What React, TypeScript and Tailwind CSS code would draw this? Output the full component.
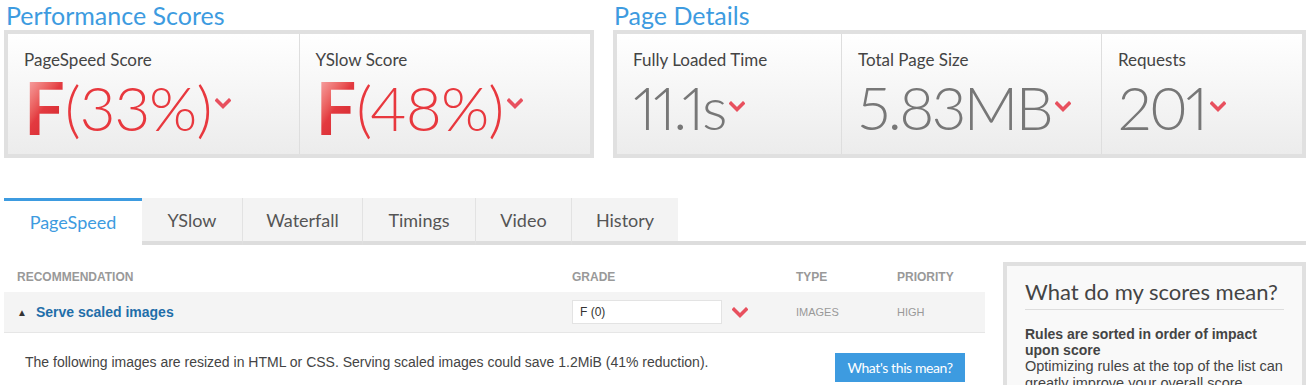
import React from "react";

const heading = "font-['Lato','Open_Sans',sans-serif]";
const arial = "font-['Liberation_Sans',Arial,sans-serif]";

const Chevron = ({ className = "" }: { className?: string }) => (
    <svg viewBox="0 0 16 12" className={className} fill="none">
        <path d="M2 2.5 L8 8.5 L14 2.5" stroke="currentColor" strokeWidth="3.6" strokeLinecap="square" />
    </svg>
);

type GradeProps = { label: string; grade: string; pct: string; border?: boolean };

const GradeCell = ({ label, grade, pct, border }: GradeProps) => (
    <div className={`flex-1 px-4 pt-4 ${border ? "border-l border-[#dedede]" : ""}`}>
        <div className={`${heading} text-[17px] text-[#444] leading-5`}>{label}</div>
        <div className="flex items-start mt-[8px]">
            <span className={`${heading} font-bold text-[72px] leading-[58px] bg-linear-to-br from-[#f7b0b3] via-[#e33a40] to-[#d0222a] bg-clip-text text-transparent`}>
                {grade}
            </span>
            <span className={`${heading} font-light proportional-nums text-[62px] leading-[58px] text-[#e8383e] tracking-[-1px]`}>{pct}</span>
            <Chevron className="w-[16px] h-[12px] text-[#e8505e] mt-[20px] ml-[4px]" />
        </div>
    </div>
);

type DetailProps = { label: string; value: string; width: string; border?: boolean };

const DetailCell = ({ label, value, width, border }: DetailProps) => (
    <div className={`${width} px-4 pt-4 ${border ? "border-l border-[#dedede]" : ""}`}>
        <div className={`${heading} text-[17px] text-[#444] leading-5`}>{label}</div>
        <div className="flex items-start mt-[8px]">
            <span className={`${heading} font-light proportional-nums text-[60px] leading-[58px] text-[#777] tracking-[-2.5px]`}>{value}</span>
            <Chevron className="w-[16px] h-[12px] text-[#e8505e] mt-[23px] ml-[4px]" />
        </div>
    </div>
);

const tabs = ["PageSpeed", "YSlow", "Waterfall", "Timings", "Video", "History"];
const tabWidths = ["w-[138px]", "w-[100px]", "w-[120px]", "w-[113px]", "w-[96px]", "w-[107px]"];

export default function App() {
    return (
        <div className="w-[1306px] h-[385px] overflow-hidden bg-white pl-[4px]">
            {/* score panels */}
            <div className="flex gap-[19px]">
                <div className="w-[590px] shrink-0">
                    <h1 className={`${heading} text-[25px] leading-[30px] text-[#3d9be0] pl-[2px]`}>Performance Scores</h1>
                    <div className="border-4 border-[#e0e0e0] h-[128px] flex bg-linear-to-b from-white to-[#ececec]">
                        <GradeCell label="PageSpeed Score" grade="F" pct="(33%)" />
                        <GradeCell label="YSlow Score" grade="F" pct="(48%)" border />
                    </div>
                </div>
                <div className="w-[693px] shrink-0">
                    <h1 className={`${heading} text-[25px] leading-[30px] text-[#3d9be0] pl-[1px]`}>Page Details</h1>
                    <div className="border-4 border-[#e0e0e0] h-[128px] flex bg-linear-to-b from-white to-[#ececec]">
                        <DetailCell label="Fully Loaded Time" value="11.1s" width="w-[224px]" />
                        <DetailCell label="Total Page Size" value="5.83MB" width="w-[260px]" border />
                        <DetailCell label="Requests" value="201" width="flex-1" border />
                    </div>
                </div>
            </div>

            {/* tabs */}
            <div className="flex mt-[40px] h-[47px]">
                {tabs.map((t, i) => (
                    <div
                        key={t}
                        className={`${tabWidths[i]} shrink-0 ${heading} text-[18px] flex items-center justify-center ${
                            i === 0
                                ? "bg-white text-[#3d9be0] border-t-[3px] border-[#3d9be0] pb-[2px]"
                                : `bg-[#f3f3f3] text-[#555] border-b-4 border-[#dddddd] ${i > 1 ? "border-l border-l-[#e2e2e2]" : ""} pt-[1px]`
                        }`}
                    >
                        {t}
                    </div>
                ))}
                <div className="flex-1 border-b-4 border-[#dddddd]" />
            </div>

            {/* body */}
            <div className="flex mt-[17px]">
                <div className={`w-[981px] shrink-0 ${arial}`}>
                    <div className="flex h-[30px] items-center font-bold text-[#999] uppercase text-[12px]">
                        <div className="w-[568px] pl-[13px]">Recommendation</div>
                        <div className="w-[224px]">Grade</div>
                        <div className="w-[101px]">Type</div>
                        <div>Priority</div>
                    </div>
                    <div className="flex h-[41px] items-center bg-[#f4f4f4] border-b border-[#e6e6e6]">
                        <div className="w-[568px] flex items-center pl-[13px]">
                            <span className="text-[10px] text-[#333] mr-[9px]">▲</span>
                            <span className="text-[14px] font-bold text-[#1f6ea9]">Serve scaled images</span>
                        </div>
                        <div className="w-[224px] flex items-center">
                            <div className="w-[150px] h-[24px] bg-white border border-[#e3e3e3] text-[12px] text-[#333] pl-[7px] flex items-center">
                                F (0)
                            </div>
                            <Chevron className="w-[16px] h-[12px] text-[#e8505e] ml-[10px] mt-[2px]" />
                        </div>
                        <div className="w-[101px] text-[11px] text-[#999]">IMAGES</div>
                        <div className="text-[11px] text-[#999]">HIGH</div>
                    </div>
                    <div className="flex items-start pt-[20px]">
                        <p className="w-[831px] pl-[21px] text-[14px] leading-[18px] text-[#444]">
                            The following images are resized in HTML or CSS. Serving scaled images could save 1.2MiB (41% reduction).
                        </p>
                        <button className={`${heading} w-[130px] h-[29px] bg-[#3d9be0] text-white text-[14px] tracking-[-0.4px]`}>
                            What's this mean?
                        </button>
                    </div>
                </div>
                <div className="ml-[18px] flex-1 border-4 border-[#e0e0e0] bg-[#f9f9f9] px-[18px] pt-[11px] h-[150px]">
                    <h2 className={`${heading} text-[22px] leading-[30px] text-[#444] border-b border-[#dddddd] pb-[2px]`}>
                        What do my scores mean?
                    </h2>
                    <div className={`${arial} text-[#444] mt-[16px]`}>
                        <div className="text-[14px] font-bold leading-[16px]">Rules are sorted in order of impact upon score</div>
                        <div className="text-[14.5px] leading-[16.5px]">Optimizing rules at the top of the list can greatly improve your overall score.</div>
                    </div>
                </div>
            </div>
        </div>
    );
}
